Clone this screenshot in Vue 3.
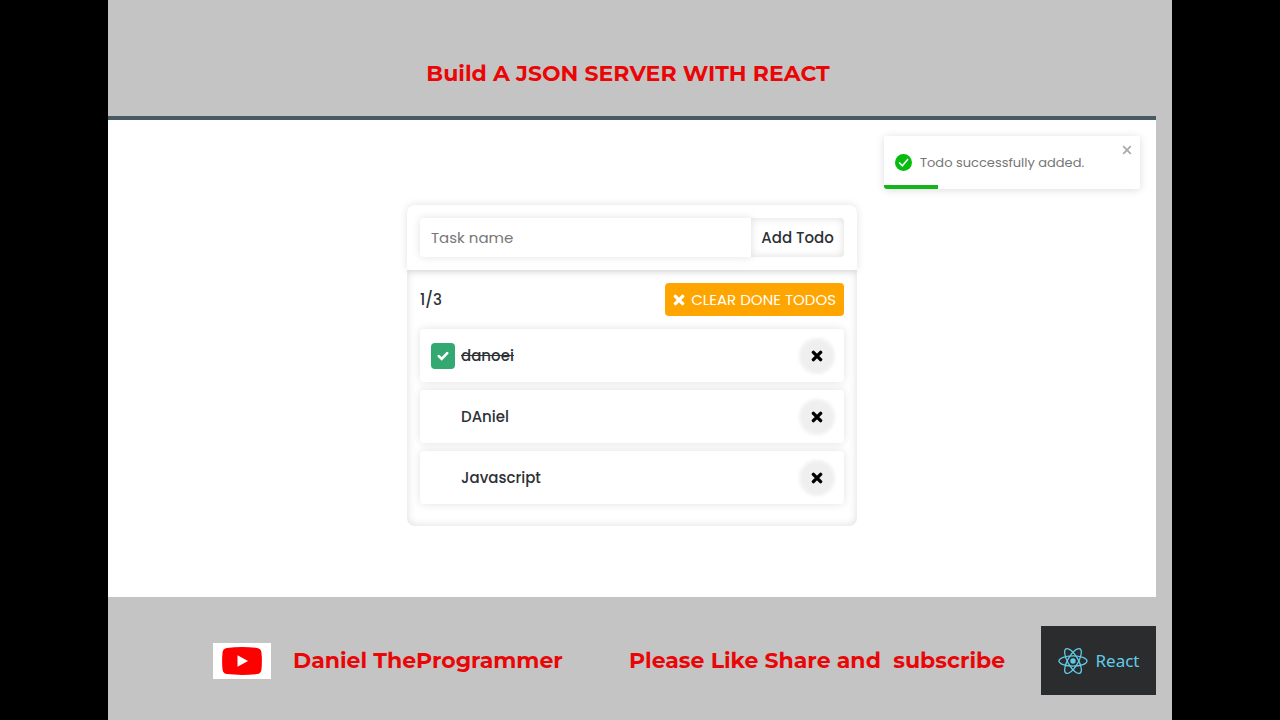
<script setup>
import { computed, ref } from 'vue'

const draft = ref('')
const toastOpen = ref(true)
const todos = ref([
  { id: 1, name: 'danoei', done: true },
  { id: 2, name: 'DAniel', done: false },
  { id: 3, name: 'Javascript', done: false },
])
const doneCount = computed(() => todos.value.filter((t) => t.done).length)

function addTodo() {
  const name = draft.value.trim()
  if (!name) return
  todos.value.push({ id: Date.now(), name, done: false })
  draft.value = ''
  toastOpen.value = true
}
function removeTodo(id) {
  todos.value = todos.value.filter((t) => t.id !== id)
}
function clearDone() {
  todos.value = todos.value.filter((t) => !t.done)
}
</script>

<template>
  <div class="page">
    <div class="slide">
      <header class="banner">
        <h1>Build A JSON SERVER WITH REACT</h1>
      </header>

      <main class="stage">
        <div v-if="toastOpen" class="toast" role="status">
          <svg class="toast-icon" viewBox="0 0 24 24" aria-hidden="true">
            <circle cx="12" cy="12" r="12" fill="#07bc0c" />
            <path d="M6.5 12.6l3.9 4 7.4-9" fill="none" stroke="#fff" stroke-width="2.2" stroke-linecap="round" />
          </svg>
          <span>Todo successfully added.</span>
          <button class="toast-close" type="button" aria-label="Close" @click="toastOpen = false">
            <svg viewBox="0 0 10 10" aria-hidden="true">
              <path d="M1.2 1.2l7.6 7.6M8.8 1.2L1.2 8.8" stroke="#aaa" stroke-width="1.8" />
            </svg>
          </button>
          <span class="toast-progress"></span>
        </div>

        <section class="card">
          <form class="card-top" @submit.prevent="addTodo">
            <input v-model="draft" class="task" type="text" placeholder="Task name" aria-label="Task name" />
            <button class="add" type="submit">Add Todo</button>
          </form>
          <div class="card-body">
            <div class="summary">
              <span class="count">{{ doneCount }}/{{ todos.length }}</span>
              <button class="clear" type="button" @click="clearDone">
                <svg viewBox="0 0 12 12" aria-hidden="true">
                  <path d="M2.4 2.4l7.2 7.2M9.6 2.4L2.4 9.6" stroke="#fff" stroke-width="3.4" stroke-linecap="round" />
                </svg>
                CLEAR DONE TODOS
              </button>
            </div>
            <ul class="list">
              <li v-for="todo in todos" :key="todo.id" class="item">
                <label class="todo">
                  <span class="tick">
                    <input v-model="todo.done" type="checkbox" />
                    <svg v-if="todo.done" viewBox="0 0 12 10" aria-hidden="true">
                      <path d="M1.8 5.1l2.9 2.8 5.500-5.700" fill="none" stroke="#fff" stroke-width="2.6" stroke-linecap="round" />
                    </svg>
                  </span>
                  <span :class="{ struck: todo.done }">{{ todo.name }}</span>
                </label>
                <button class="remove" type="button" :aria-label="'Remove ' + todo.name" @click="removeTodo(todo.id)">
                  <svg viewBox="0 0 12 12" aria-hidden="true">
                    <path d="M2.4 2.4l7.2 7.2M9.6 2.4L2.4 9.6" stroke="#000" stroke-width="3.4" stroke-linecap="round" />
                  </svg>
                </button>
              </li>
            </ul>
          </div>
        </section>
      </main>

      <footer class="footer">
        <span class="youtube">
          <svg viewBox="0 0 40 28" role="img" aria-label="YouTube">
            <path d="M5 .9Q20-.7 35 .9Q38.800 1.400 39.400 5Q40.400 14 39.400 23Q38.800 26.600 35 27.100Q20 28.700 5 27.100Q1.200 26.600 .6 23Q-.4 14 .6 5Q1.200 1.400 5 .9Z" fill="#f00" />
            <path d="M15.500 8.200L26 14L15.500 19.800Z" fill="#fff" />
          </svg>
        </span>
        <span>Daniel TheProgrammer</span>
        <span>Please Like Share and&nbsp; subscribe</span>
        <span class="react">
          <svg viewBox="0 0 30 28" aria-hidden="true">
            <g fill="none" stroke="#61cbe8" stroke-width="1.3">
              <ellipse cx="15" cy="14" rx="14" ry="5.200" />
              <ellipse cx="15" cy="14" rx="14" ry="5.200" transform="rotate(60 15 14)" />
              <ellipse cx="15" cy="14" rx="14" ry="5.200" transform="rotate(120 15 14)" />
            </g>
            <circle cx="15" cy="14" r="2.700" fill="#61cbe8" />
          </svg>
          React
        </span>
      </footer>
    </div>
  </div>
</template>

<style>
body {
  margin: 0;
  background: #000;
}
</style>

<style scoped>
* {
  box-sizing: border-box;
}
button,
input {
  margin: 0;
  padding: 0;
  border: 0;
  font: inherit;
  color: inherit;
}
button {
  cursor: pointer;
}
svg {
  display: block;
}
.page {
  min-height: 100vh;
  padding: 0 108px;
  display: flex;
  background: #000;
  font-family: Poppins, Inter, sans-serif;
  font-size: 15px;
  color: #2d3135;
}
.slide {
  flex: 1;
  display: flex;
  flex-direction: column;
  background: #c4c4c4;
}
.banner {
  height: 116px;
  padding: 32px 24px 0 0;
  display: flex;
  align-items: center;
  justify-content: center;
}
h1,
.footer {
  margin: 0;
  font-family: Montserrat, Inter, sans-serif;
  font-size: 22px;
  font-weight: 700;
  line-height: 28px;
  color: #ea0606;
  white-space: nowrap;
}
.stage {
  position: relative;
  flex: 1;
  margin-right: 16px;
  padding: 85px 16px 71px;
  border-top: 4px solid #485a64;
  background: #fff;
}
.toast {
  position: absolute;
  top: 16px;
  right: 16px;
  width: 256px;
  height: 53px;
  padding-left: 11px;
  display: flex;
  align-items: center;
  gap: 8px;
  overflow: hidden;
  border-radius: 3px;
  box-shadow: 0 1px 8px rgba(0, 0, 0, 0.14);
  font-size: 13px;
  color: #757575;
}
.toast-icon {
  width: 17px;
  height: 17px;
}
.toast-close {
  position: absolute;
  top: 9px;
  right: 8px;
  background: none;
}
.toast-close svg {
  width: 10px;
  height: 10px;
}
.toast-progress {
  position: absolute;
  left: 0;
  bottom: 0;
  width: 54px;
  height: 4px;
  background: #12b51a;
}
.card {
  max-width: 450px;
  margin: 0 auto;
  border-radius: 8px;
}
.card-top {
  position: relative;
  padding: 13px;
  display: flex;
  border-radius: 8px 8px 0 0;
  background: #fff;
  box-shadow: 0 0 8px rgba(0, 0, 0, 0.12);
}
.task {
  flex: 1;
  min-width: 0;
  height: 39px;
  padding: 0 11px;
  border-radius: 4px 0 0 4px;
  background: #fff;
  box-shadow: 0 0 8px rgba(0, 0, 0, 0.12);
}
.task::placeholder {
  color: #777;
  opacity: 1;
}
.add {
  width: 93px;
  height: 39px;
  border-radius: 0 4px 4px 0;
  background: #fff;
  box-shadow: inset 0 0 8px rgba(0, 0, 0, 0.14);
  font-weight: 500;
}
.card-body {
  padding: 13px 13px 22px;
  border-radius: 0 0 8px 8px;
  box-shadow: inset 0 0 8px rgba(0, 0, 0, 0.14);
}
.summary {
  display: flex;
  align-items: center;
  justify-content: space-between;
}
.count,
.todo {
  font-weight: 500;
}
.clear {
  height: 33px;
  padding: 0 8px;
  display: flex;
  align-items: center;
  gap: 6px;
  border-radius: 4px;
  background: #ffa500;
  color: #fff;
}
.clear svg,
.remove svg {
  width: 12px;
  height: 12px;
}
.list {
  margin: 13px 0 0;
  padding: 0;
  display: grid;
  gap: 8px;
  list-style: none;
}
.item {
  height: 53px;
  padding: 0 9px 0 11px;
  display: flex;
  align-items: center;
  justify-content: space-between;
  border-radius: 4px;
  background: #fff;
  box-shadow: 0 0 8px rgba(0, 0, 0, 0.12);
}
.todo {
  display: flex;
  align-items: center;
  gap: 6px;
}
.struck {
  text-decoration: line-through;
}
.tick {
  display: grid;
  place-items: center;
}
.tick input,
.tick svg {
  grid-area: 1 / 1;
}
.tick input {
  width: 24px;
  height: 26px;
  appearance: none;
  border-radius: 4px;
}
.tick input:checked {
  background: #34a871;
}
.tick svg {
  width: 12px;
  height: 10px;
  pointer-events: none;
}
.remove {
  width: 36px;
  height: 36px;
  display: grid;
  place-items: center;
  border-radius: 50%;
  background: #efefef;
  box-shadow: inset 0 0 4px #fff, 0 0 4px #f4f4f4;
}
.footer {
  height: 123px;
  padding: 4px 16px 0 105px;
  display: grid;
  grid-template-columns: 58px 314px 1fr auto;
  column-gap: 22px;
  align-items: center;
}
.youtube {
  height: 36px;
  display: grid;
  place-items: center;
  background: #fff;
}
.youtube svg {
  width: 40px;
  height: 28px;
}
.react {
  width: 115px;
  height: 69px;
  display: flex;
  align-items: center;
  justify-content: center;
  gap: 8px;
  background: #2b2c2e;
  font-family: "Noto Sans", sans-serif;
  font-size: 17px;
  font-weight: 400;
  color: #61cbe8;
}
.react svg {
  width: 30px;
  height: 28px;
}
</style>
